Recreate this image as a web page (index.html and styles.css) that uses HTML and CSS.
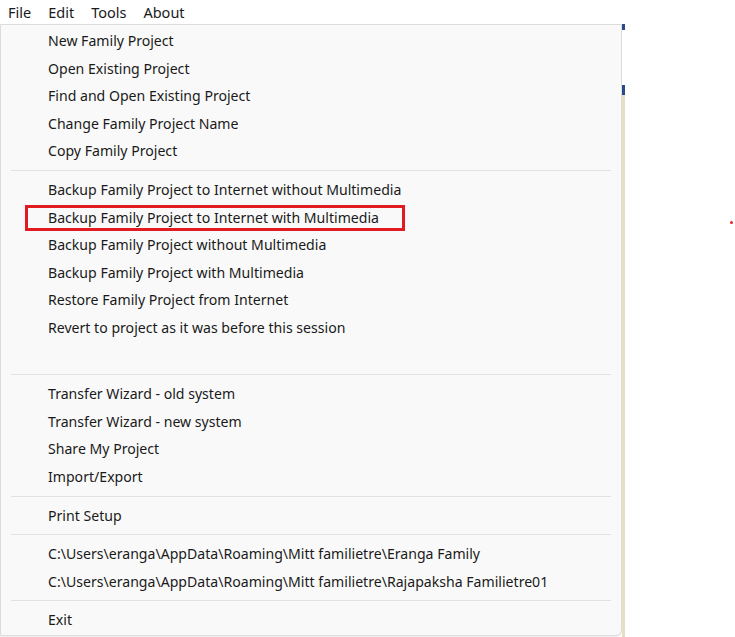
FILE: index.html
```html
<!DOCTYPE html>
<html>
<head>
<meta charset="utf-8">
<link rel="stylesheet" href="styles.css">
</head>
<body>
<div class="menubar">
  <span class="mb-item">File</span>
  <span class="mb-item">Edit</span>
  <span class="mb-item">Tools</span>
  <span class="mb-item">About</span>
</div>
<div class="stage">
  <div class="menu">
    <div class="item">New Family Project</div>
    <div class="item">Open Existing Project</div>
    <div class="item">Find and Open Existing Project</div>
    <div class="item">Change Family Project Name</div>
    <div class="item">Copy Family Project</div>
    <div class="sep"></div>
    <div class="item">Backup Family Project to Internet without Multimedia</div>
    <div class="item marked">Backup Family Project to Internet with Multimedia</div>
    <div class="item">Backup Family Project without Multimedia</div>
    <div class="item">Backup Family Project with Multimedia</div>
    <div class="item">Restore Family Project from Internet</div>
    <div class="item">Revert to project as it was before this session</div>
    <div class="item"></div>
    <div class="sep"></div>
    <div class="item">Transfer Wizard - old system</div>
    <div class="item">Transfer Wizard - new system</div>
    <div class="item">Share My Project</div>
    <div class="item">Import/Export</div>
    <div class="sep"></div>
    <div class="item">Print Setup</div>
    <div class="sep"></div>
    <div class="item">C:\Users\eranga\AppData\Roaming\Mitt familietre\Eranga Family</div>
    <div class="item">C:\Users\eranga\AppData\Roaming\Mitt familietre\Rajapaksha Familietre01</div>
    <div class="sep"></div>
    <div class="item">Exit</div>
  </div>
  <div class="behind">
    <div class="b-blue1"></div>
    <div class="b-white"></div>
    <div class="b-blue2"></div>
    <div class="b-beige"></div>
  </div>
  <div class="dot"></div>
</div>
</body>
</html>
```
FILE: styles.css
```css
html, body {
  margin: 0;
  padding: 0;
  background: #ffffff;
}
body {
  font-family: "Noto Sans", "Open Sans", sans-serif;
  font-size: 14px;
  color: #1a1a1a;
  width: 735px;
  height: 637px;
  overflow: hidden;
}
.menubar {
  height: 24px;
  display: flex;
  align-items: center;
  padding-left: 8px;
}
.mb-item {
  font-size: 14.5px;
  margin-right: 17px;
  line-height: 24px;
}
.stage {
  position: relative;
  display: flex;
  align-items: flex-start;
  height: 613px;
}
.menu {
  width: 622px;
  height: 612px;
  background: #f9f9f9;
  border: 1px solid #dcdcdc;
  border-radius: 0 0 6px 0;
  padding-top: 2px;
  box-sizing: border-box;
  box-shadow: 0 1px 2px rgba(0,0,0,0.08);
}
.item {
  height: 27.6px;
  line-height: 27.6px;
  padding-left: 47px;
  font-size: 14.1px;
  white-space: nowrap;
  position: relative;
}
.sep {
  height: 11px;
  display: flex;
  align-items: center;
  padding: 0 10px 0 10px;
}
.sep::before {
  content: "";
  flex: 1;
  height: 1px;
  background: #e2e2e2;
}
.marked::after {
  content: "";
  position: absolute;
  left: 24px;
  top: 1px;
  width: 374px;
  height: 20px;
  border: 3px solid #e21b23;
}
.behind {
  width: 3px;
  display: flex;
  flex-direction: column;
  height: 613px;
}
.b-blue1 { height: 6px; background: #2b4a8a; }
.b-white { height: 55px; background: #ffffff; }
.b-blue2 { height: 10px; background: #2b4a8a; }
.b-beige { flex: 1; background: #e6dfc3; }
.dot {
  position: absolute;
  left: 730px;
  top: 197px;
  width: 3px;
  height: 3px;
  border-radius: 50%;
  background: #e8202a;
}
```
